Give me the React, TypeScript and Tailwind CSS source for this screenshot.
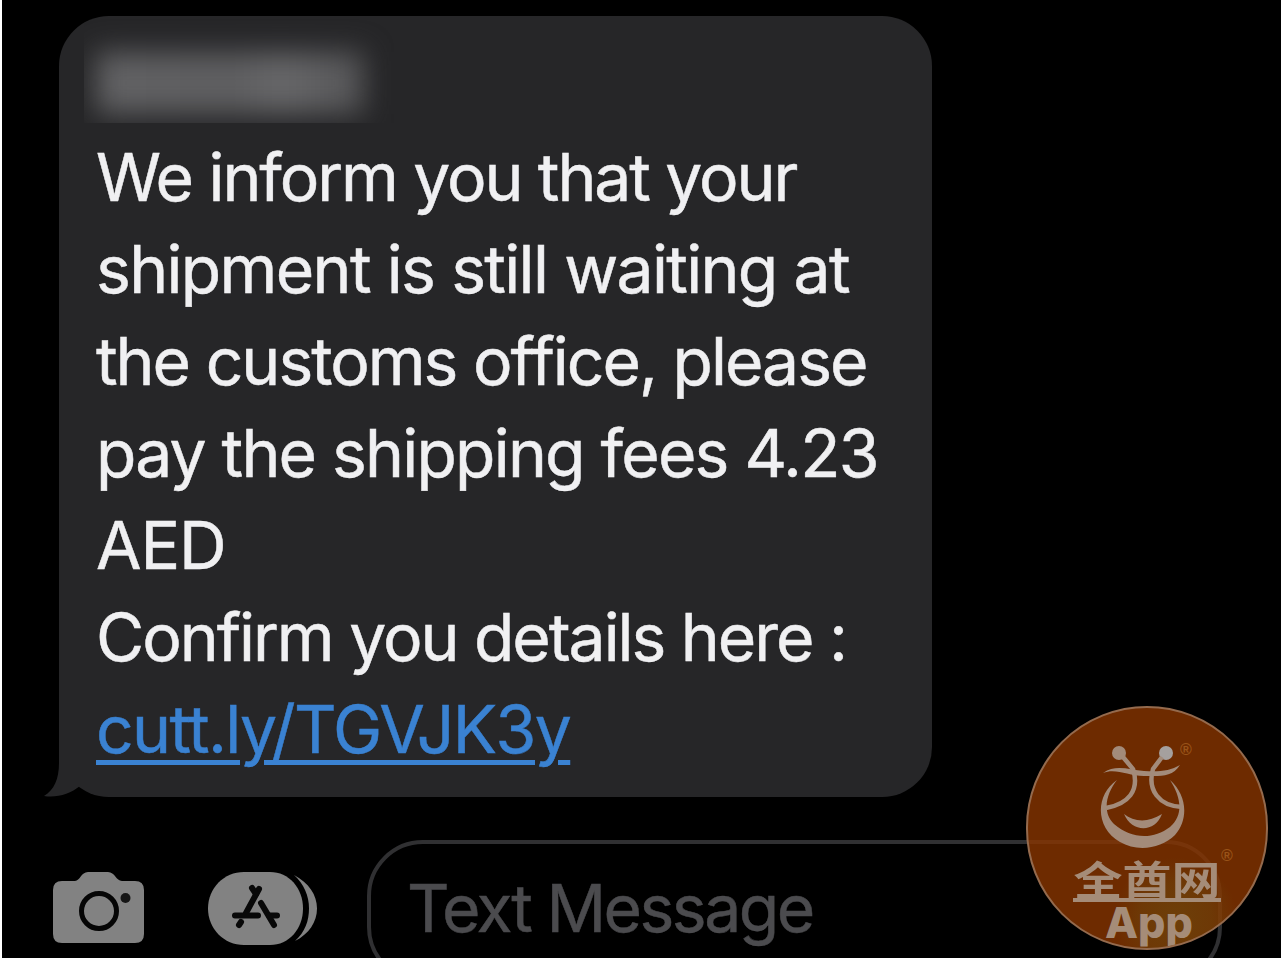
const messageLines = [
  { text: "We inform you that your", tracking: "tracking-[-2.08px]" },
  { text: "shipment is still waiting at", tracking: "tracking-[-1.66px]" },
  { text: "the customs office, please", tracking: "tracking-[-2px]" },
  { text: "pay the shipping fees 4.23", tracking: "tracking-[-1.8px]" },
  { text: "AED", tracking: "tracking-[-1.1px]" },
  { text: "Confirm you details here :", tracking: "tracking-[-2.04px]" },
];

function BubbleTail() {
  return (
    <svg className="absolute bottom-0 -left-[15px] h-[60px] w-[70px]" viewBox="0 0 70 60">
      <path d="M15 0 V26 C15 42 10 53 0 59 C13 61 26 57 36 49 V0 Z" fill="#262628" />
    </svg>
  );
}

function MessageBubble() {
  return (
    <article className="relative h-[781px] w-[873px] rounded-[50px] bg-[#262628] pl-[37px]">
      <BubbleTail />
      <div className="-ml-3 h-[107px] w-[310px] overflow-hidden pt-[36px] pl-3">
        <div className="h-[62px] w-[268px] bg-[linear-gradient(90deg,#626264,#5e5e60_50%,#676769_70%,#545456)] blur-[14px]" />
      </div>
      <div className="relative mt-[8px] font-['Inter',sans-serif] text-[66px] leading-[92px] whitespace-nowrap text-[#f0f0f2] [-webkit-text-stroke:0.5px]">
        {messageLines.map((line) => (
          <p key={line.text} className={line.tracking}>
            {line.text}
          </p>
        ))}
        <a
          href="#"
          className="tracking-[-1.6px] text-[#3a82d2] underline decoration-[5px] underline-offset-[7px]"
        >
          cutt.ly/TGVJK3y
        </a>
      </div>
    </article>
  );
}

function CameraIcon() {
  return (
    <svg className="h-[72px] w-[92px]" viewBox="0 0 92 72">
      <path
        d="M9 9 H22 C27 9 28 0 35 0 H55 C62 0 63 9 69 9 H82 Q91 9 91 18 V62 Q91 71 82 71 H9 Q0 71 0 62 V18 Q0 9 9 9 Z"
        fill="#828282"
      />
      <circle cx="46" cy="39" r="17.5" fill="none" stroke="#050505" strokeWidth="5" />
      <circle cx="72.5" cy="26" r="5" fill="#151515" />
    </svg>
  );
}

function AppStoreIcon() {
  return (
    <svg className="h-[73px] w-[110px]" viewBox="0 0 110 73">
      <path d="M36 0 H62 C81 0 95 16 95 36.5 S81 73 62 73 H36 C16 73 0 57 0 36.5 S16 0 36 0 Z" fill="#828282" />
      <path d="M86 3 C101 11 109 23 109 36.5 S101 62 87 69 C97 60 101 49 101 36.5 S96 12 86 3 Z" fill="#828282" />
      <g stroke="#080808" strokeWidth="6" strokeLinecap="round">
        <path d="M51 17 L38 41" />
        <path d="M44 16 L48 22 M53 31 L66 53" />
        <path d="M27 43.5 H50 M61 43.5 H69" />
        <path d="M33 50 L31 53" />
      </g>
    </svg>
  );
}

function ComposeBar() {
  return (
    <div className="flex h-[117px] items-start pl-[53px]">
      <div className="mt-[32px]">
        <CameraIcon />
      </div>
      <div className="mt-[32px] ml-[63px]">
        <AppStoreIcon />
      </div>
      <div className="ml-[49px] h-[143px] w-[855px] shrink-0 rounded-[56px] border-4 border-[#303032] pt-[18px] pl-[36px] font-['Inter',sans-serif] text-[66px] leading-[92px] tracking-[-2.5px] text-[#4b4b4e] [-webkit-text-stroke:0.5px]">
        Text Message
      </div>
    </div>
  );
}

function Watermark() {
  return (
    <div className="absolute top-[706px] left-[1026px] flex h-[244px] w-[242px] flex-col items-center overflow-hidden rounded-full border-2 border-[#946a4d] bg-[#8a3600]/80 bg-[radial-gradient(circle_at_62%_88%,#6d4f1090_0,#6d4f1060_14%,transparent_24%)] text-[#a58c78]">
      <svg className="mt-[34px] mr-[6px] h-[108px] w-[100px] shrink-0" viewBox="0 0 100 108" fill="none" stroke="#a38b7a">
        <circle cx="25" cy="11" r="7" fill="#a38b7a" stroke="none" />
        <circle cx="72" cy="11" r="7" fill="#a5a09e" stroke="none" />
        <path d="M9 31 C22 22 35 28 50 29 C65 30 76 29 86 23 C78 36 64 34 50 34 C34 34 22 26 9 31 Z" fill="#a38b7a" stroke="none" />
        <path d="M29 15 L39 27 C46 49 34 62 12 66" strokeWidth="4.5" />
        <path d="M68 15 L59 27 C53 48 65 64 88 65" strokeWidth="4.5" />
        <path
          d="M23 38 C1 53 1 86 26 100 C43 110 67 107 81 93 C95 77 93 53 76 38 C87 55 90 73 76 85 C59 98 37 97 20 82 C8 70 12 52 23 38 Z"
          fill="#a38b7a"
          stroke="none"
        />
        <path d="M30 72 C40 80 54 81 68 72 C61 91 38 91 30 72 Z" fill="#a38b7a" stroke="none" />
      </svg>
      <div className="mt-[8px] flex h-[44px] w-[148px] shrink-0 justify-center border-b-4 border-[#a58c78]">
        <span className="origin-top scale-y-[0.82] font-['Noto_Sans_CJK_SC',sans-serif] text-[49px] leading-[48px] font-bold whitespace-nowrap">
          全酋网
        </span>
      </div>
      <div className="-mt-px ml-1 font-['Inter',sans-serif] text-[43px] leading-[42px] font-extrabold">App</div>
      <span className="absolute top-[34px] left-[152px] font-['Liberation_Sans',sans-serif] text-base leading-4 font-bold text-[#995319]">®</span>
      <span className="absolute top-[140px] left-[193px] font-['Liberation_Sans',sans-serif] text-base leading-4 font-bold text-[#995319]">®</span>
    </div>
  );
}

export default function App() {
  return (
    <main className="relative h-[958px] w-[1281px] overflow-hidden border-l-2 border-white bg-black">
      <div className="pt-4 pl-[57px]">
        <MessageBubble />
      </div>
      <div className="-ml-0.5 pt-[43px]">
        <ComposeBar />
      </div>
      <div className="absolute top-0 -left-0.5">
        <Watermark />
      </div>
    </main>
  );
}
